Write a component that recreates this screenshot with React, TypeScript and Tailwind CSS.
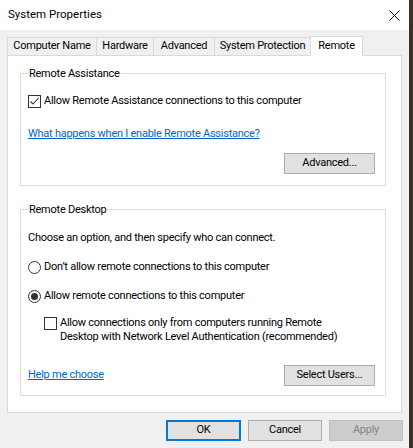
import React from 'react';

const font = { fontFamily: 'Roboto, "Liberation Sans", Arial, sans-serif' };

const tabs = [
  { label: 'Computer Name', width: 'w-[90px]' },
  { label: 'Hardware', width: 'w-[58px]' },
  { label: 'Advanced', width: 'w-[62px]' },
  { label: 'System Protection', width: 'w-[97px]' },
];

const CheckBox: React.FC<{ checked?: boolean }> = ({ checked }) => (
  <span className="flex h-[13px] w-[13px] shrink-0 items-center justify-center border border-[#333333] bg-white">
    {checked && (
      <svg width="11" height="11" viewBox="0 0 11 11" fill="none">
        <polyline points="1.5,5.5 4,8 9.5,2" stroke="#333333" strokeWidth="1.1" />
      </svg>
    )}
  </span>
);

const Radio: React.FC<{ checked?: boolean }> = ({ checked }) => (
  <span className="flex h-[13px] w-[13px] shrink-0 items-center justify-center rounded-full border border-[#333333] bg-white">
    {checked && <span className="h-[7px] w-[7px] rounded-full bg-[#333333]" />}
  </span>
);

const Button: React.FC<{ label: string; width: string; primary?: boolean; disabled?: boolean }> = ({
  label,
  width,
  primary,
  disabled,
}) => (
  <button
    className={
      'flex h-[21px] items-center justify-center ' +
      width +
      (primary
        ? ' border-2 border-[#0078d7] bg-[#e1e1e1] text-black'
        : disabled
        ? ' border border-[#bfbfbf] bg-[#cccccc] text-[#838383]'
        : ' border border-[#adadad] bg-[#e1e1e1] text-black')
    }
  >
    {label}
  </button>
);

const GroupBox: React.FC<{ title: string; className: string; children: React.ReactNode }> = ({
  title,
  className,
  children,
}) => (
  <div className={'w-[366px] border border-[#dcdcdc] pl-[7px] ' + className}>
    <div className="-mt-[8px] w-fit bg-white px-px leading-[15px]">{title}</div>
    {children}
  </div>
);

export default function App() {
  return (
    <div
      className="flex h-[448px] w-[413px] overflow-hidden text-[11px] tracking-[-0.25px] text-black"
      style={font}
    >
      <div className="flex w-[409px] flex-col bg-[#f0f0f0]">
        <div className="flex h-[30px] items-center justify-between bg-white pl-2 pr-[9px]">
          <span className="text-[11.5px] tracking-normal">System Properties</span>
          <svg width="11" height="11" viewBox="0 0 11 11">
            <path d="M0.5 0.5 L10.5 10.5 M10.5 0.5 L0.5 10.5" stroke="#111111" strokeWidth="1" />
          </svg>
        </div>

        <div className="px-[7px] pt-[6px]">
          <div className="flex h-[19px] items-end">
            {tabs.map((t, i) => (
              <div
                key={t.label}
                className={
                  'flex h-[18px] items-center justify-center border border-b-0 border-[#d9d9d9] bg-[#f0f0f0] ' +
                  t.width +
                  (i > 0 ? ' -ml-px' : '')
                }
              >
                {t.label}
              </div>
            ))}
            <div className="relative z-10 -mb-px -ml-px flex h-[20px] w-[53px] items-start justify-center border border-b-0 border-[#d9d9d9] bg-white pt-px">
              Remote
            </div>
          </div>

          <div className="h-[358px] w-[395px] border border-[#d9d9d9] bg-white pl-[12px] pt-[17px]">
            <GroupBox title="Remote Assistance" className="h-[113px]">
              <div className="mt-[13px] flex h-[15px] items-center gap-[3px]">
                <CheckBox checked />
                <span>Allow Remote Assistance connections to this computer</span>
              </div>
              <div className="mt-[17px] leading-[15px]">
                <a className="text-[#0066cc] underline">What happens when I enable Remote Assistance?</a>
              </div>
              <div className="mt-[12px] flex justify-end pr-[10px]">
                <Button label="Advanced..." width="w-[91px]" />
              </div>
            </GroupBox>

            <GroupBox title="Remote Desktop" className="mt-[23px] h-[187px]">
              <div className="mt-[13px] leading-[15px]">Choose an option, and then specify who can connect.</div>
              <div className="mt-[15px] flex h-[15px] items-center gap-[3px]">
                <Radio />
                <span>Don&rsquo;t allow remote connections to this computer</span>
              </div>
              <div className="mt-[14px] flex h-[15px] items-center gap-[3px]">
                <Radio checked />
                <span>Allow remote connections to this computer</span>
              </div>
              <div className="mt-[12px] flex items-start gap-[3px] pl-[16px]">
                <span className="mt-px">
                  <CheckBox />
                </span>
                <span className="leading-[14px]">
                  Allow connections only from computers running Remote
                  <br />
                  Desktop with Network Level Authentication (recommended)
                </span>
              </div>
              <div className="mt-[21px] flex h-[21px] items-center justify-between pr-[10px]">
                <a className="text-[#0066cc] underline">Help me choose</a>
                <Button label="Select Users..." width="w-[91px]" />
              </div>
            </GroupBox>
          </div>

          <div className="-mr-px mt-[7px] flex justify-end gap-[7px]">
            <Button label="OK" width="w-[75px]" primary />
            <Button label="Cancel" width="w-[74px]" />
            <Button label="Apply" width="w-[74px]" disabled />
          </div>
        </div>
      </div>
      <div className="w-[4px] bg-[#3a302b]" />
    </div>
  );
}
